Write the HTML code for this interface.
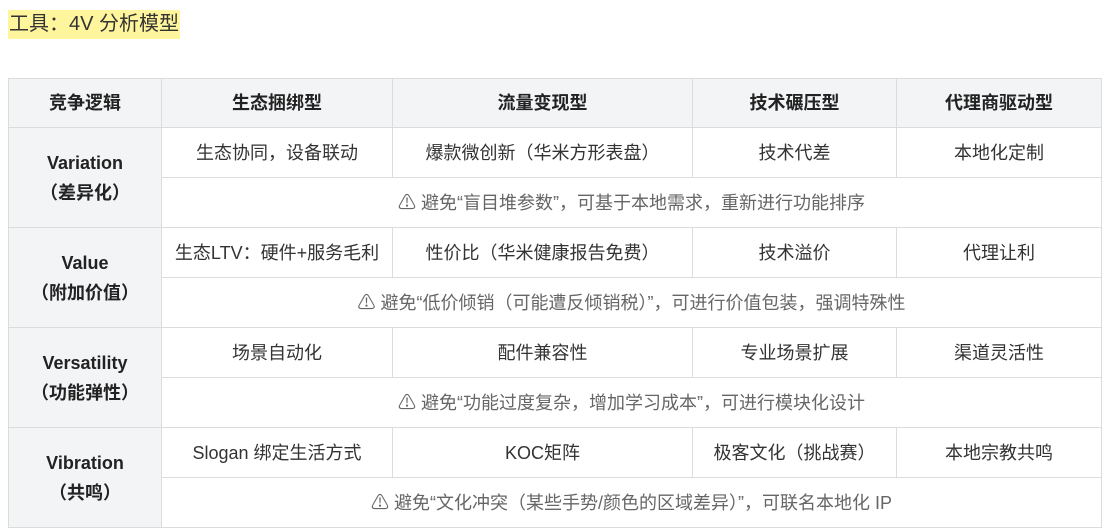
<!DOCTYPE html><html><head><meta charset="utf-8"><style>
body{margin:0;background:#fff;font-family:"Liberation Sans","Noto Sans CJK SC",sans-serif;color:#333;}
.t{position:absolute;left:8px;top:10px;height:29px;line-height:29px;background:#fff59d;font-size:20px;padding:0 1px;color:#333}
table{position:absolute;left:8px;top:78px;border-collapse:collapse;width:1093px;font-size:18px;table-layout:fixed}
td,th{border:1px solid #dcdcdc;text-align:center;padding:0;height:49px;line-height:22px}
th{background:#f3f4f6;font-weight:bold;color:#222;height:48px}
td.h{background:#f3f4f6;font-weight:bold;color:#222;line-height:30px}
td.w{color:#666}
</style></head><body>
<div class="t">工具：4V 分析模型</div>
<table>
<colgroup><col style="width:153px"><col style="width:231px"><col style="width:300px"><col style="width:204px"><col style="width:205px"></colgroup>
<tr><th>竞争逻辑</th><th>生态捆绑型</th><th>流量变现型</th><th>技术碾压型</th><th>代理商驱动型</th></tr>
<tr><td class="h" rowspan="2">Variation<br>（差异化）</td><td>生态协同，设备联动</td><td>爆款微创新（华米方形表盘）</td><td>技术代差</td><td>本地化定制</td></tr>
<tr><td class="w" colspan="4">⚠ 避免“盲目堆参数”，可基于本地需求，重新进行功能排序</td></tr>
<tr><td class="h" rowspan="2">Value<br>（附加价值）</td><td>生态LTV：硬件+服务毛利</td><td>性价比（华米健康报告免费）</td><td>技术溢价</td><td>代理让利</td></tr>
<tr><td class="w" colspan="4">⚠ 避免“低价倾销（可能遭反倾销税）”，可进行价值包装，强调特殊性</td></tr>
<tr><td class="h" rowspan="2">Versatility<br>（功能弹性）</td><td>场景自动化</td><td>配件兼容性</td><td>专业场景扩展</td><td>渠道灵活性</td></tr>
<tr><td class="w" colspan="4">⚠ 避免“功能过度复杂，增加学习成本”，可进行模块化设计</td></tr>
<tr><td class="h" rowspan="2">Vibration<br>（共鸣）</td><td>Slogan 绑定生活方式</td><td>KOC矩阵</td><td>极客文化（挑战赛）</td><td>本地宗教共鸣</td></tr>
<tr><td class="w" colspan="4">⚠ 避免“文化冲突（某些手势/颜色的区域差异）”，可联名本地化 IP</td></tr>
</table>
</body></html>
